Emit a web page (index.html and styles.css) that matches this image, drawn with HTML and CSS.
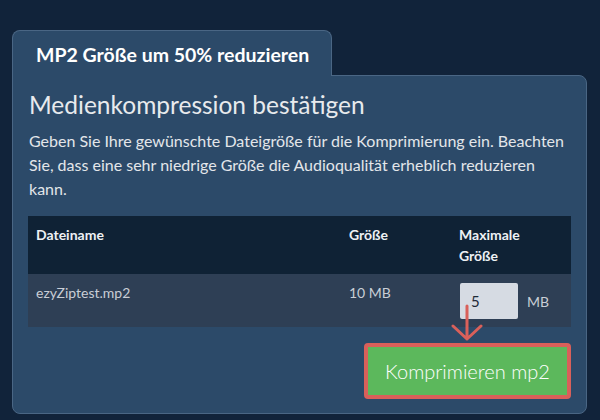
FILE: index.html
```html
<!DOCTYPE html>
<html lang="de">
<head>
<meta charset="utf-8">
<title>MP2 Größe um 50% reduzieren</title>
<link rel="stylesheet" href="styles.css">
</head>
<body>
<div class="wrap">
  <div class="tab"><h2 class="tab-title">MP2 Größe um 50% reduzieren</h2></div>
  <div class="panel">
    <h1 class="heading">Medienkompression bestätigen</h1>
    <p class="desc">Geben Sie Ihre gewünschte Dateigröße für die Komprimierung ein. Beachten Sie, dass eine sehr niedrige Größe die Audioqualität erheblich reduzieren kann.</p>
    <table class="files">
      <thead>
        <tr>
          <th class="c-name">Dateiname</th>
          <th class="c-size">Größe</th>
          <th class="c-max">Maximale Größe</th>
        </tr>
      </thead>
      <tbody>
        <tr>
          <td>ezyZiptest.mp2</td>
          <td>10 MB</td>
          <td>
            <div class="max">
              <input class="max-input" type="text" value="5"><span class="unit">MB</span>
              <svg class="arrow" width="32" height="38" viewBox="0 0 32 38" aria-hidden="true">
                <path d="M16 2 V35 M2 22 L16 35 L30 22" fill="none" stroke="#d9605a" stroke-width="3" stroke-linecap="round" stroke-linejoin="round"/>
              </svg>
            </div>
          </td>
        </tr>
      </tbody>
    </table>
    <div class="actions"><button class="btn" type="button">Komprimieren mp2</button></div>
  </div>
</div>
</body>
</html>
```

FILE: styles.css
```css
html, body {
  margin: 0;
  height: 100%;
}
body {
  background: #11233a;
  font-family: Lato, "Open Sans", "Liberation Sans", sans-serif;
  padding: 30px 13px 0 12px;
  box-sizing: border-box;
  color: #e6e9ed;
}
.wrap {
  display: flex;
  flex-direction: column;
  align-items: flex-start;
}
.tab {
  position: relative;
  z-index: 2;
  background: #2c4a69;
  border: 1px solid #4a6684;
  border-bottom: none;
  border-radius: 8px 8px 0 0;
  padding: 12px 22px 9px 23px;
  margin-bottom: -1px;
}
.tab-title {
  margin: 0;
  font-size: 19.5px;
  line-height: 24px;
  font-weight: 700;
  color: #ffffff;
  white-space: nowrap;
}
.panel {
  position: relative;
  align-self: stretch;
  background: #2c4a69;
  border: 1px solid #4a6684;
  border-radius: 0 8px 8px 8px;
  padding: 15px 15px 14px 15px;
}
.heading {
  margin: 0 0 11px 1px;
  font-size: 24.5px;
  line-height: 27px;
  font-weight: 400;
  color: #e8eaed;
}
.desc {
  margin: 0 0 15px 1px;
  font-size: 16px;
  line-height: 24px;
  color: #e3e6ea;
}
.files {
  width: 100%;
  border-collapse: collapse;
  font-size: 14px;
  line-height: 21px;
}
.files th {
  background: #0f2235;
  color: #eef1f4;
  font-weight: 700;
  text-align: left;
  vertical-align: top;
  padding: 8px;
}
.files th.c-size { width: 94px; }
.files th.c-max { width: 82px; padding-right: 30px; }
.files td {
  background: #2e3f55;
  color: #c9ced6;
  vertical-align: top;
  padding: 8px;
}
.max {
  position: relative;
  display: flex;
  align-items: center;
  margin-top: 1px;
}
.max-input {
  width: 58px;
  height: 36px;
  box-sizing: border-box;
  margin: 0 0 0 1px;
  border: none;
  border-radius: 2px;
  background: #d6dbe3;
  color: #1e2a38;
  font-family: inherit;
  font-size: 15px;
  padding: 0 0 0 11px;
}
.unit {
  margin-left: 9px;
  color: #c9ced6;
}
.arrow {
  position: absolute;
  left: -8px;
  top: 21px;
}
.actions {
  display: flex;
  justify-content: flex-end;
  margin-top: 16px;
}
.btn {
  width: 207px;
  height: 56px;
  box-sizing: border-box;
  background: #5cb85c;
  border: 4px solid #d9605a;
  border-radius: 4px;
  color: #ffffff;
  font-family: inherit;
  font-size: 20px;
  font-weight: 300;
  padding: 0;
}
```
